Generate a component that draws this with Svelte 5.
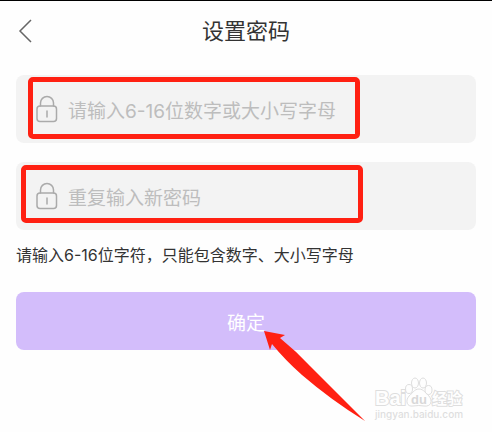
<script>
  let password = $state("")
  let repeat = $state("")

  const handleSubmit = e => {
    e.preventDefault()
  }
</script>

{#snippet lock()}
  <svg class="lock" viewBox="0 0 22 28" aria-hidden="true">
    <path d="M4.5 11V8a6.5 6.5 0 0 1 13 0V11" />
    <rect x="1" y="11" width="19.500" height="15.500" rx="3" />
    <path d="M11 16v6" />
  </svg>
{/snippet}

<main>
  <header>
    <button type="button" class="back" aria-label="返回">
      <svg viewBox="0 0 14 24" aria-hidden="true"><path d="M13 1L2 12L13 23" /></svg>
    </button>
    <h1>设置密码</h1>
  </header>

  <form onsubmit={handleSubmit}>
    <div class="field">
      <label for="password" aria-label="密码">{@render lock()}</label>
      <input id="password" type="password" placeholder="请输入6-16位数字或大小写字母" bind:value={password}>
      <span class="mark mark-password"></span>
    </div>
    <div class="field">
      <label for="repeat" aria-label="重复密码">{@render lock()}</label>
      <input id="repeat" type="password" placeholder="重复输入新密码" bind:value={repeat}>
      <span class="mark mark-repeat"></span>
    </div>
    <p>请输入6-16位字符，只能包含数字、大小写字母</p>
    <div class="action">
      <button type="submit" class="submit">确定</button>
      <svg class="arrow" viewBox="0 0 102 92" aria-hidden="true">
        <path d="M0 0L21 4L16 7Q32 20 46 35L101 90Q67 69 38 44Q21 29 8 13L6 19Z" />
      </svg>
    </div>
  </form>

  <footer>
    <svg viewBox="0 0 92 46" role="img" aria-label="Baidu 经验 jingyan.baidu.com">
      <g class="paw">
        <ellipse cx="35" cy="13" rx="3.500" ry="4.500" />
        <ellipse cx="41" cy="7" rx="3.500" ry="5" />
        <ellipse cx="49" cy="7" rx="3.500" ry="5" />
        <ellipse cx="54.500" cy="14" rx="3.500" ry="4.500" />
        <path d="M45 13C40 13 38 18 35 20C31 25 33 31 39 30Q45 29 50 30C57 31 59 25 55 20C52 18 50 13 45 13Z" />
      </g>
      <text class="brand" x="1" y="29">Bai</text>
      <text class="du" x="37" y="28">du</text>
      <text class="brand-cn" x="58" y="28">经验</text>
      <text class="site" x="1" y="42">jingyan.baidu.com</text>
    </svg>
  </footer>
</main>

<style>
  :global(body) {
    margin: 0;
    background: #fefefe;
  }

  main {
    border-top: 1px solid #000;
    padding: 0 16px;
    color: #333;
    font-family: Inter, "Noto Sans CJK SC", sans-serif;
  }

  header {
    display: grid;
    grid-template-columns: 24px 1fr 24px;
    align-items: center;
    height: 60px;
  }

  button {
    border: 0;
    padding: 0;
    font-family: inherit;
    cursor: pointer;
  }

  .back {
    display: flex;
    padding-left: 2px;
    background: none;
  }

  .back svg {
    width: 14px;
    height: 24px;
    fill: none;
    stroke: #666;
    stroke-width: 1.5;
  }

  h1 {
    margin: 0;
    font-size: 22px;
    font-weight: 400;
    line-height: 32px;
    text-align: center;
  }

  form {
    display: flex;
    flex-direction: column;
    padding-top: 14px;
  }

  .field {
    position: relative;
    display: flex;
    align-items: center;
    gap: 10px;
    height: 68px;
    margin-bottom: 19px;
    padding: 0 20px;
    border-radius: 8px;
    background: #f3f3f3;
  }

  .field:nth-child(2) {
    margin-bottom: 12px;
  }

  label {
    display: flex;
  }

  .lock {
    width: 22px;
    height: 28px;
    fill: none;
    stroke: #aaa;
    stroke-width: 1.5;
    stroke-linecap: round;
  }

  input {
    flex: 1;
    min-width: 0;
    border: 0;
    padding: 6px 0 0;
    background: none;
    color: #333;
    font-family: inherit;
    font-size: 19px;
    line-height: 28px;
    outline: none;
  }

  input::placeholder {
    color: #bdbdbd;
    opacity: 1;
  }

  .mark {
    position: absolute;
    box-sizing: border-box;
    border: 5px solid #ff2012;
    border-radius: 5px;
    pointer-events: none;
  }

  .mark-password {
    top: 2px;
    left: 12px;
    width: 332px;
    height: 62px;
  }

  .mark-repeat {
    top: 3px;
    left: 5px;
    width: 342px;
    height: 58px;
  }

  p {
    margin: 0 0 24px;
    font-size: 16px;
    line-height: 26px;
  }

  .action {
    position: relative;
  }

  .submit {
    display: block;
    width: 100%;
    height: 58px;
    border-radius: 8px;
    background: #d3bdfb;
    color: #fff;
    font-size: 19px;
  }

  .arrow {
    position: absolute;
    top: 39px;
    left: calc(50% + 18px);
    width: 102px;
    height: 92px;
    fill: #ff2012;
    pointer-events: none;
  }

  footer {
    display: flex;
    justify-content: flex-end;
    padding: 26px 10px 0 0;
  }

  footer svg {
    width: 92px;
    height: 46px;
    fill: #fefefe;
    stroke: #dedede;
    stroke-width: 1;
  }

  text {
    font-family: "Liberation Sans", "Noto Sans CJK SC", sans-serif;
    font-weight: 700;
    paint-order: stroke;
  }

  .brand {
    font-size: 20px;
    stroke-width: 2;
  }

  .du {
    font-size: 13px;
    fill: #d8d8d8;
    stroke: none;
  }

  .brand-cn {
    font-size: 15px;
    stroke-width: 2;
  }

  .site {
    font-family: Inter, sans-serif;
    font-size: 10px;
    font-weight: 500;
    fill: #dedede;
    stroke: none;
  }
</style>
